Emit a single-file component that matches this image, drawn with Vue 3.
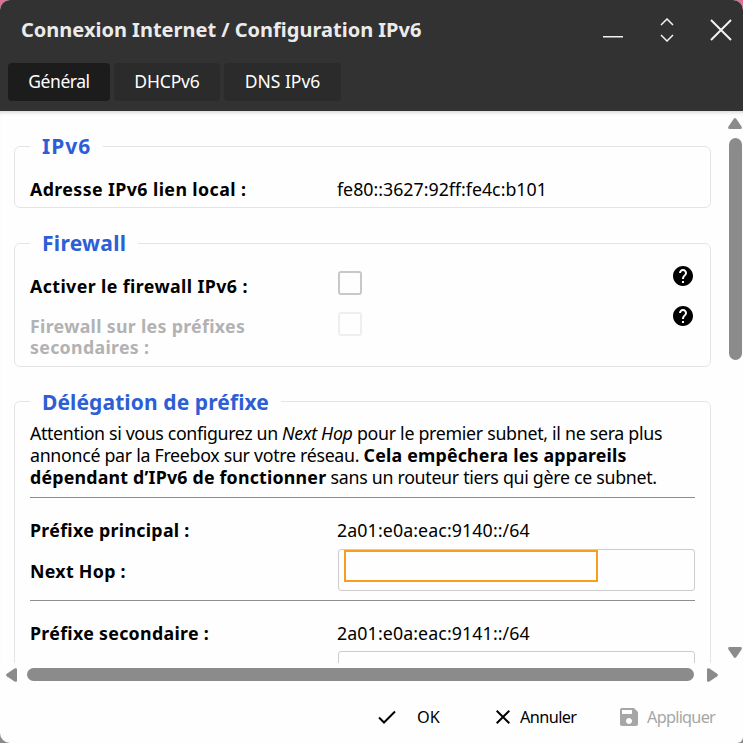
<script setup>
const tabs = [
  { label: 'Général', cls: 'tab-general', active: true },
  { label: 'DHCPv6', cls: 'tab-dhcp', active: false },
  { label: 'DNS IPv6', cls: 'tab-dns', active: false },
]
</script>

<template>
  <div class="desktop">
    <div class="window">
      <header class="header">
        <div class="titlebar">
          <h1 class="title">Connexion Internet / Configuration IPv6</h1>
          <div class="controls">
            <svg class="min" width="20" height="24" viewBox="0 0 20 24"><path d="M0 18.8H20" /></svg>
            <svg width="14" height="24" viewBox="0 0 14 24"><path d="M1 7L7 1L13 7M1 17L7 23L13 17" /></svg>
            <svg width="22" height="24" viewBox="0 0 22 24"><path d="M1 2L21 22M21 2L1 22" class="close" /></svg>
          </div>
        </div>
        <nav class="tabs">
          <button v-for="t in tabs" :key="t.label" class="tab" :class="[t.cls, { active: t.active }]">{{ t.label }}</button>
        </nav>
      </header>

      <div class="body">
        <main class="content">
          <fieldset class="group group-ip">
            <legend class="lg-ip">IPv6</legend>
            <div class="row row-ip">
              <span class="label wide">Adresse IPv6 lien local :</span>
              <span class="value">fe80::3627:92ff:fe4c:b101</span>
            </div>
          </fieldset>

          <fieldset class="group group-fw">
            <legend class="lg-fw">Firewall</legend>
            <div class="row row-fw">
              <span class="label wide">Activer le firewall IPv6 :</span>
              <span class="check"></span>
              <svg class="help" width="20" height="20" viewBox="2 2 20 20"><path d="M12 2C6.48 2 2 6.48 2 12s4.48 10 10 10 10-4.48 10-10S17.52 2 12 2zm1 17h-2v-2h2v2zm2.07-7.75l-.9.92C13.45 12.9 13 13.5 13 15h-2v-.5c0-1.1.45-2.1 1.17-2.83l1.24-1.26c.37-.36.59-.86.59-1.41 0-1.1-.9-2-2-2s-2 .9-2 2H8c0-2.21 1.79-4 4-4s4 1.79 4 4c0 .88-.36 1.68-.93 2.25z" /></svg>
            </div>
            <div class="row row-fw row-sub">
              <span class="label">Firewall sur les préfixes<br />secondaires :</span>
              <span class="check off"></span>
              <svg class="help" width="20" height="20" viewBox="2 2 20 20"><path d="M12 2C6.48 2 2 6.48 2 12s4.48 10 10 10 10-4.48 10-10S17.52 2 12 2zm1 17h-2v-2h2v2zm2.07-7.75l-.9.92C13.45 12.9 13 13.5 13 15h-2v-.5c0-1.1.45-2.1 1.17-2.83l1.24-1.26c.37-.36.59-.86.59-1.41 0-1.1-.9-2-2-2s-2 .9-2 2H8c0-2.21 1.79-4 4-4s4 1.79 4 4c0 .88-.36 1.68-.93 2.25z" /></svg>
            </div>
          </fieldset>

          <fieldset class="group group-px">
            <legend class="lg-px">Délégation de préfixe</legend>
            <div class="note">
              <div><span class="lead">Attention si vous configurez un </span><em>Next Hop</em> pour le premier subnet, il ne sera plus</div>
              <div>annoncé par la Freebox sur votre réseau. <b>Cela empêchera les appareils</b></div>
              <div><b>dépendant d’IPv6 de fonctionner</b> sans un routeur tiers qui gère ce subnet.</div>
            </div>
            <div class="rule"></div>
            <div class="row row-px">
              <span class="label">Préfixe principal :</span>
              <span class="value prefix">2a01:e0a:eac:9140::/64</span>
            </div>
            <div class="row row-hop">
              <span class="label">Next Hop :</span>
              <span class="field"><span class="mark"></span></span>
            </div>
            <div class="rule"></div>
            <div class="row row-px">
              <span class="label">Préfixe secondaire :</span>
              <span class="value prefix">2a01:e0a:eac:9141::/64</span>
            </div>
            <div class="row row-hop last">
              <span></span>
              <span class="field"></span>
            </div>
          </fieldset>
        </main>
        <div class="vbar">
          <svg width="14" height="11" viewBox="0 0 14 11"><path d="M5.8 .8Q7-.6 8.200 .8L13.500 8.500Q14.500 11 12.500 11H1.500Q-.5 11 .5 8.500Z" /></svg>
          <div class="vthumb"></div>
          <svg width="14" height="11" viewBox="0 0 14 11"><path d="M5.800 10.200Q7 11.600 8.200 10.200L13.500 2.500Q14.500 0 12.500 0H1.500Q-.5 0 .5 2.500Z" /></svg>
        </div>
      </div>

      <div class="hbar">
        <svg width="11" height="14" viewBox="0 0 11 14"><path d="M.8 5.800Q-.6 7 .8 8.200L8.500 13.500Q11 14.500 11 12.500V1.500Q11-.5 8.500 .5Z" /></svg>
        <div class="hthumb"></div>
        <svg width="11" height="14" viewBox="0 0 11 14"><path d="M10.200 5.800Q11.600 7 10.200 8.200L2.500 13.500Q0 14.500 0 12.500V1.500Q0-.5 2.500 .5Z" /></svg>
      </div>

      <footer class="footer">
        <button class="action ok">
          <svg width="18" height="14" viewBox="0 0 18 14"><path d="M1 7.500L6 12.500L17 1.500" fill="none" stroke="currentColor" stroke-width="2" /></svg>
          <span>OK</span>
        </button>
        <button class="action cancel">
          <svg width="14" height="14" viewBox="0 0 14 14"><path d="M.7 .7L13.300 13.300M13.300 .7L.7 13.300" fill="none" stroke="currentColor" stroke-width="2" /></svg>
          <span>Annuler</span>
        </button>
        <button class="action apply">
          <svg width="18" height="18" viewBox="3 3 18 18"><path fill="currentColor" d="M17 3H5c-1.110 0-2 .9-2 2v14c0 1.100.89 2 2 2h14c1.100 0 2-.9 2-2V7l-4-4zm-5 16c-1.660 0-3-1.340-3-3s1.340-3 3-3 3 1.340 3 3-1.340 3-3 3zm3-10H5V5h10v4z" /></svg>
          <span>Appliquer</span>
        </button>
      </footer>
    </div>
  </div>
</template>

<style>
body {
  margin: 0;
  overflow: hidden;
}
</style>

<style scoped>
* {
  box-sizing: border-box;
}
.desktop {
  width: 743px;
  height: 743px;
  background: linear-gradient(#d9738f 0 50%, #8a8a8a 50%);
  font-family: "Noto Sans", sans-serif;
  font-size: 17.8px;
  color: #000;
}
.window {
  height: 743px;
  border-radius: 10px 10px 6px 10px;
  overflow: hidden;
  background: #fefefe;
  display: flex;
  flex-direction: column;
}
.header {
  height: 111px;
  flex: none;
  background: #323232;
}
.titlebar {
  height: 63px;
  padding: 0 11px 4px 21px;
  display: flex;
  align-items: center;
  justify-content: space-between;
}
.title {
  margin: 0;
  font-size: 20px;
  line-height: 28px;
  color: #ebebeb;
  white-space: nowrap;
}
.controls {
  display: flex;
  align-items: center;
  gap: 36px;
}
.controls svg {
  fill: none;
  stroke: #f2f2f2;
  stroke-width: 1.5;
}
.controls .min {
  margin-right: 1px;
}
.controls .close {
  stroke-width: 2;
}
.tabs {
  display: flex;
  gap: 4px;
  padding-left: 8px;
}
button {
  font: inherit;
  border: 0;
  padding: 0;
  white-space: nowrap;
}
.tab {
  height: 38px;
  padding-bottom: 2px;
  border-radius: 4px;
  background: #2b2b2b;
  color: #fff;
  font-size: 17.5px;
  line-height: 36px;
}
.tab.active {
  background: #1c1c1c;
}
.tab-general {
  width: 102px;
  letter-spacing: -0.45px;
}
.tab-dhcp {
  width: 106px;
  letter-spacing: -0.15px;
}
.tab-dns {
  width: 117px;
}
.body {
  height: 552px;
  flex: none;
  display: flex;
  overflow: hidden;
  box-shadow: inset 0 4px 4px -3px #ccc;
}
.content {
  width: 725px;
  padding: 23px 14px 0;
}
.group {
  min-width: 0;
  margin: 0;
  width: 697px;
  padding: 0 15px;
  border: 1px solid #e4e4e4;
  border-radius: 6px;
}
.group-ip {
  height: 74px;
  margin-bottom: 23px;
}
.group-fw {
  height: 136px;
  margin-bottom: 22px;
}
.group-px {
  height: 340px;
}
legend {
  padding: 0 12px;
  line-height: 24px;
  font-size: 21px;
  font-weight: 700;
  color: #2d5ed6;
  white-space: nowrap;
}
.lg-ip {
  letter-spacing: 1px;
}
.lg-fw {
  letter-spacing: 0.3px;
}
.lg-px {
  height: 24px;
  line-height: 26px;
  letter-spacing: 0.1px;
}
.row {
  display: grid;
  grid-template-columns: 308px 1fr;
  line-height: 21px;
  white-space: nowrap;
}
.label {
  font-weight: 700;
  letter-spacing: 0.3px;
}
.label.wide {
  letter-spacing: 0.4px;
}
.value {
  margin-left: -1px;
}
.prefix {
  letter-spacing: 0.1px;
}
.row-ip {
  padding-top: 21px;
}
.row-fw {
  grid-template-columns: 308px 1fr 22px;
  height: 40px;
  padding-top: 16px;
}
.row-fw .label {
  padding-top: 5px;
}
.row-sub .label {
  padding-top: 5px;
  color: #b2b2b2;
}
.check {
  width: 24px;
  height: 24px;
  border: 2px solid #c8c8c8;
  border-radius: 3px;
}
.check.off {
  margin-top: 1px;
  border-color: #eee;
}
.help {
  margin-top: -5px;
}
.note {
  padding-top: 9px;
  line-height: 22px;
  white-space: nowrap;
  letter-spacing: -0.3px;
}
.note .lead {
  letter-spacing: -0.36px;
}
.note b {
  letter-spacing: 0.2px;
}
.rule {
  height: 1px;
  background: #8e8e8e;
}
.note + .rule {
  margin-top: 9px;
}
.row-px {
  height: 43px;
  padding-top: 22px;
}
.row-hop {
  padding-top: 8px;
  margin-bottom: 9px;
}
.row-hop.last {
  padding-top: 7px;
}
.row-hop .label {
  padding-top: 3px;
  line-height: 39px;
}
.field {
  height: 42px;
  border: 1px solid #ccc;
  border-radius: 3px;
  padding-left: 5px;
}
.mark {
  display: block;
  width: 254px;
  height: 32px;
  border: 2px solid #f5a01d;
}
.vbar {
  width: 18px;
  display: flex;
  flex-direction: column;
  align-items: center;
  padding: 7px 0 5px 2px;
}
.vbar svg,
.hbar svg {
  fill: #8b8b8b;
  flex: none;
}
.vthumb {
  width: 13px;
  height: 222px;
  margin: 9px 0 auto;
  border-radius: 7px;
  background: #8b8b8b;
}
.hbar {
  height: 23px;
  flex: none;
  display: flex;
  align-items: center;
  padding-left: 6px;
}
.hthumb {
  width: 667px;
  height: 13px;
  margin: 0 13px 0 10px;
  border-radius: 7px;
  background: #8b8b8b;
}
.footer {
  height: 57px;
  display: flex;
  align-items: center;
  justify-content: flex-end;
  padding: 4px 28px 0 0;
}
.action {
  display: flex;
  align-items: center;
  background: transparent;
  font-size: 16.3px;
  color: #000;
}
.action svg {
  flex: none;
}
.ok {
  width: 118px;
}
.ok svg {
  margin-right: 21px;
}
.cancel {
  width: 124px;
  letter-spacing: -0.6px;
}
.cancel svg {
  margin-right: 10px;
}
.apply {
  width: 95px;
  color: #a6a6a6;
  letter-spacing: -0.75px;
}
.apply svg {
  margin-right: 9px;
}
</style>
